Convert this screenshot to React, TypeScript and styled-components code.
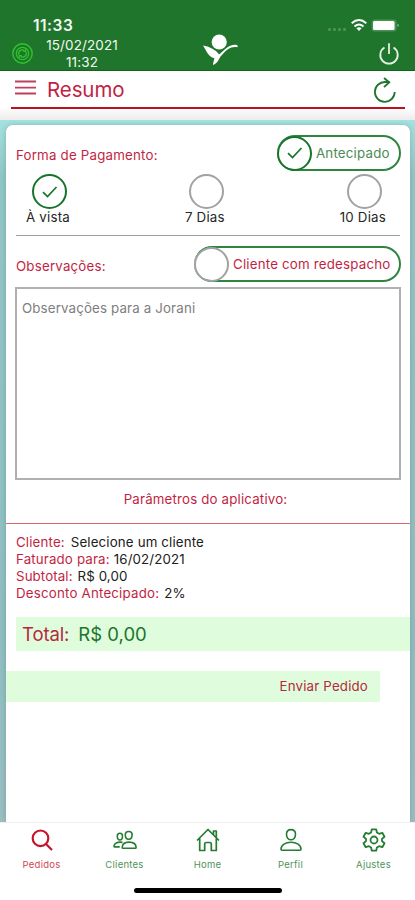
import React from 'react';
import styled, { createGlobalStyle } from 'styled-components';

const GREEN = '#20752c';
const RED = '#c31f43';
const MINT = '#dffddd';

const GlobalStyle = createGlobalStyle`
  * { box-sizing: border-box; }
  body { margin: 0; font-family: Inter, "Liberation Sans", sans-serif; background: #fff; }
  button { border: 0; padding: 0; background: none; font: inherit; display: block; }
  svg { display: block; flex: none; }
`;

const Screen = styled.div`
  width: 415px;
  height: 900px;
  display: flex;
  flex-direction: column;
  overflow: hidden;
`;

const Header = styled.header`
  height: 71px;
  background: ${GREEN};
  color: #f2faf2;
  display: flex;
  flex-direction: column;
  border-bottom: 1px solid #126218;
`;

const StatusBar = styled.div`
  height: 37px;
  padding: 16px 14px 0 33px;
  display: flex;
  justify-content: space-between;
`;

const Clock = styled.span`
  font-size: 15.5px;
  line-height: 20px;
  font-weight: 600;
  letter-spacing: 0.5px;
`;

const HeaderRow = styled.div`
  flex: 1;
  padding: 0 14px 0 11px;
  display: grid;
  grid-template-columns: 23px 96px 1fr 22px;
`;

const SyncSlot = styled.div`
  padding-top: 6px;
`;

const SyncTime = styled.div`
  padding-top: 1px;
  font-size: 13.5px;
  line-height: 17px;
  text-align: center;
  white-space: nowrap;
  letter-spacing: 0.1px;
`;

const LogoSlot = styled.div`
  padding: 0 0 0 72px;
  margin-top: -2px;
`;

const PowerSlot = styled.button`
  color: #e4f1e4;
  display: flex;
  align-items: flex-start;
  padding-top: 6px;
  margin-left: -1px;
`;

const TitleBar = styled.div`
  height: 49px;
  padding: 0 10px 0 11px;
  background: linear-gradient(#fff 36px, #ececec 49px);
`;

const TitleRow = styled.div`
  height: 38px;
  border-bottom: 2px solid #bd1120;
  display: flex;
  padding: 0 8px 0 4px;
`;

const MenuButton = styled.button`
  width: 32px;
  height: 23px;
  padding-top: 9px;
`;

const Title = styled.h1`
  flex: 1;
  margin: 0;
  font-size: 20.5px;
  line-height: 37px;
  font-weight: 400;
  color: ${RED};
  letter-spacing: -0.1px;
`;

const RefreshButton = styled.button`
  height: 36px;
  display: flex;
  align-items: flex-start;
  padding-top: 5px;
`;

const Backdrop = styled.main`
  flex: 1;
  padding: 5px 5px 0 6px;
  background: linear-gradient(#a5e2e0 0, #91c6c7 55px, #8fbec1 520px, #9abec2 702px);
  display: flex;
`;

const Card = styled.section`
  flex: 1;
  background: #fff;
  border-radius: 7px 7px 0 0;
  box-shadow: 0 0 5px rgba(40, 80, 85, 0.25);
  display: flex;
  flex-direction: column;
`;

const FieldHead = styled.div`
  display: flex;
  justify-content: space-between;
  padding: 10px 9px 0 10px;
`;

const Label = styled.span`
  color: ${RED};
  font-size: 13.3px;
  line-height: 16px;
  padding-top: 12px;
  letter-spacing: 0.2px;
`;

const Pill = styled.button<{ $width: number; $color: string }>`
  display: flex;
  align-items: center;
  gap: 4px;
  width: ${p => p.$width}px;
  height: 36px;
  border: 2px solid #2f8440;
  border-left: 0;
  border-radius: 18px;
  color: ${p => p.$color};
  font-size: 13.3px;
  letter-spacing: 0.2px;
  white-space: nowrap;
`;

const Ring = styled.span<{ $on?: boolean }>`
  width: 35px;
  height: 35px;
  flex: none;
  border: 2px solid ${p => (p.$on ? '#17752a' : '#a2a2a2')};
  border-radius: 50%;
  display: flex;
  align-items: center;
  justify-content: center;
`;

const Terms = styled.div`
  margin: 3px 10px 0;
  height: 62px;
  border-bottom: 1px solid #a0a0a0;
  display: flex;
  justify-content: space-between;
  padding: 0 14px 0 10px;
`;

const Term = styled.button`
  display: flex;
  flex-direction: column;
  align-items: center;
  align-self: flex-start;
  font-size: 13.3px;
  line-height: 16px;
  letter-spacing: 0.2px;
  color: #262626;
  white-space: nowrap;

  ${Ring} { margin-left: 4px; }
`;

const Notes = styled.textarea`
  display: block;
  margin: 5px 9px 0 9px;
  height: 193px;
  padding: 11px 5px;
  border: 2px solid #b0b0b0;
  border-radius: 0;
  resize: none;
  font: 13.3px/16px Inter, "Liberation Sans", sans-serif;
  letter-spacing: 0.15px;
  outline: 0;

  &::placeholder { color: #7e7e7e; opacity: 1; }
`;

const Params = styled.div`
  height: 44px;
  padding: 11px 5px 0 0;
  text-align: center;
  font-size: 13.3px;
  line-height: 16px;
  letter-spacing: 0.17px;
  color: ${RED};
  border-bottom: 1px solid #db6670;
`;

const Summary = styled.dl`
  margin: 10px 0 0 10px;
`;

const SummaryLine = styled.div<{ $ls: number; $gap: number }>`
  display: flex;
  gap: ${p => p.$gap}px;
  font-size: 13.3px;
  line-height: 17.1px;
  letter-spacing: ${p => p.$ls}px;

  dt { color: ${RED}; }
  dd { margin: 0; color: #202020; }
`;

const Total = styled.div`
  margin: 15px 0 0 10px;
  height: 34px;
  padding-left: 6px;
  background: ${MINT};
  display: flex;
  gap: 9px;
  font-size: 18.5px;
  line-height: 34px;
  color: ${GREEN};

  strong { font-weight: 400; color: #b6283d; letter-spacing: -0.1px; }
`;

const Submit = styled.button`
  margin-top: 20px;
  width: 374px;
  height: 31px;
  padding-right: 12px;
  background: ${MINT};
  color: #b6283d;
  font-size: 13.3px;
  line-height: 31px;
  letter-spacing: 0.17px;
  text-align: right;
`;

const TabBar = styled.nav`
  height: 78px;
  background: #fff;
  border-top: 1px solid #eee;
  display: flex;
  flex-direction: column;
  align-items: center;
`;

const Tabs = styled.div`
  width: 415px;
  height: 64px;
  display: grid;
  grid-template-columns: repeat(5, 83px);
`;

const Tab = styled.button<{ $active?: boolean }>`
  display: flex;
  flex-direction: column;
  align-items: center;
  padding-top: 4px;
  color: ${p => (p.$active ? '#c5152c' : '#267c32')};
  font-size: 9.5px;
  line-height: 12px;
  letter-spacing: 0.25px;
  gap: 6px;
`;

const TabLabel = styled.span`
  opacity: 0.82;
`;

const HomeIndicator = styled.div`
  width: 148px;
  height: 5px;
  margin-top: 1px;
  border-radius: 3px;
  background: #000;
`;

const Check = () => (
  <svg width="18" height="14" viewBox="0 0 18 14" fill="none" stroke="#17752a" strokeWidth="1.7">
    <path d="M2 7.2 6.5 11.5 15.5 2" />
  </svg>
);

const StatusIcons = () => (
  <svg width="74" height="18" viewBox="0 0 74 18" fill="#fff">
    <g fill="#4b9155">
      <rect x="1" y="12" width="3" height="3" rx="1" />
      <rect x="6" y="12" width="3" height="3" rx="1" />
      <rect x="11" y="12" width="3" height="3" rx="1" />
      <rect x="16" y="12" width="3" height="3" rx="1" />
    </g>
    <g fill="none" stroke="#fff" strokeWidth="2">
      <path d="M24.7 7.2Q32 .8 39.3 7.2" />
      <path d="M27.5 10.4Q32 6.5 36.5 10.4" />
    </g>
    <path d="M29.4 12.2Q32 10.2 34.6 12.2L32 15Z" />
    <rect x="44.5" y="3.5" width="25" height="12" rx="3" fill="#4b9155" />
    <rect x="46" y="5" width="21.5" height="9" rx="1.5" />
    <path d="M70.5 7.5q3 1.800 0 3.600z" fill="#8aba90" />
  </svg>
);

const SyncIcon = () => (
  <svg width="23" height="23" viewBox="0 0 23 23" fill="none" stroke="#2fc52d">
    <circle cx="11.5" cy="11.5" r="9.7" strokeWidth="1.4" />
    <circle cx="11.5" cy="11.5" r="6.2" strokeWidth="1.3" />
    <path d="M8 12.800a3.500 3.500 0 0 1 5.500-4M15 10.200a3.500 3.500 0 0 1-5.500 4" strokeWidth="1.300" />
    <path d="M12.200 9.400h2.600V7M10.800 13.600H8.200V16" strokeWidth="1.100" />
  </svg>
);

const Logo = () => (
  <svg width="37" height="33" viewBox="0 0 37 33" fill="#fff">
    <circle cx="17.2" cy="8" r="7.6" />
    <path d="M1 11.5C7 12.3 13.500 15.500 17.200 20.500 22 16.500 28 9.200 35.300 11.200L35.800 13.200C28 11.500 23 17.300 18.500 22.500 16.500 25.500 16 29 11 31 11 29.200 12 26.500 12.300 24.300 6.500 22.500 5 18 1 11.500Z" />
  </svg>
);

const PowerIcon = () => (
  <svg width="22" height="24" viewBox="0 0 22 24" fill="none" stroke="currentColor" strokeWidth="1.8">
    <path d="M6.500 5.500a8.700 8.700 0 1 0 9 0M11 1.300v10.700" />
  </svg>
);

const MenuIcon = () => (
  <svg width="21" height="15" viewBox="0 0 21 15" stroke="#c23f5c" strokeWidth="1.8">
    <path d="M0 1.500h21M0 7.700h21M0 13.500h21" />
  </svg>
);

const RefreshIcon = () => (
  <svg width="24" height="28" viewBox="0 0 24 28" fill="none" stroke={GREEN} strokeWidth="1.8">
    <path d="M21.700 16A9.900 9.900 0 1 1 12 6h4.300" />
    <path d="M11 2 16.300 6.200 11 11.200" />
  </svg>
);

const SearchIcon = () => (
  <svg width="26" height="26" viewBox="0 0 26 26" fill="none" stroke="currentColor" strokeWidth="2.2">
    <circle cx="11.5" cy="11.300" r="7.800" />
    <path d="m17 17 6 6" />
  </svg>
);

const PeopleIcon = () => (
  <svg width="26" height="26" viewBox="0 0 26 26" fill="none" stroke="currentColor" strokeWidth="1.6" strokeLinejoin="round">
    <path d="M13.300 7.500c0-2 1.100-3 3.400-3s3.400 1 3.400 3c0 2.700-1.300 4.800-3.400 4.800s-3.400-2.100-3.400-4.800ZM10.200 20.500c.1-3.700 2.700-5.400 6.700-5.400s7.200 1.700 7.200 5.400c0 .5-.3.700-.8.700H11c-.5 0-.8-.2-.8-.7Z" />
    <path d="M10.500 9c0 2.200-.9 4-2.600 4s-2.600-1.800-2.600-4c0-1.700 1-2.700 2.600-2.700s2.600 1 2.600 2.700ZM10.500 15.400c-4.500-.9-8 .5-8.600 3.700 0 .6.300.8.800.8h5" />
  </svg>
);

const HomeIcon = () => (
  <svg width="26" height="26" viewBox="0 0 26 26" fill="none" stroke="currentColor" strokeWidth="1.7" strokeLinejoin="round" strokeLinecap="round">
    <path d="M2.500 13 13 2.500 23.500 13M18.500 8V4h2.800v6.700M4.700 11.500V23.500h5V17q0-1.500 1.500-1.500h3.600q1.500 0 1.500 1.500v6.500h5V11.500" />
  </svg>
);

const PersonIcon = () => (
  <svg width="26" height="26" viewBox="0 0 26 26" fill="none" stroke="currentColor" strokeWidth="1.6">
    <path d="M8.500 7.300c0-3 1.800-4.700 4.500-4.700s4.500 1.700 4.500 4.700-1.800 5.500-4.500 5.500-4.500-2.500-4.500-5.500ZM3 22.200c0-4.300 4.500-6.900 10-6.900s10 2.600 10 6.900c0 .6-.3 1-1 1H4c-.7 0-1-.4-1-1Z" />
  </svg>
);

const GearIcon = () => (
  <svg width="26" height="26" viewBox="0 0 26 26" fill="none" stroke="currentColor" strokeWidth="1.8" strokeLinejoin="round">
    <circle cx="13" cy="13" r="3.5" />
    <path d="M10.800 2.300h4.400l.7 3.200 2.200 1.300 3.200-1 2.200 3.900-2.500 2.200v2.200l2.500 2.200-2.200 3.900-3.200-1-2.200 1.300-.7 3.200h-4.400l-.7-3.200-2.200-1.300-3.200 1-2.200-3.900L5 14.100v-2.200L2.500 9.700l2.200-3.900 3.200 1 2.200-1.300Z" />
  </svg>
);

const summary = [
  { label: 'Cliente:', value: 'Selecione um cliente', ls: 0.15, gap: 6 },
  { label: 'Faturado para:', value: '16/02/2021', ls: 0.15, gap: 4 },
  { label: 'Subtotal:', value: 'R$ 0,00', ls: 0.1, gap: 5 },
  { label: 'Desconto Antecipado:', value: '2%', ls: 0.2, gap: 5 },
];

const tabs = [
  { label: 'Pedidos', Icon: SearchIcon },
  { label: 'Clientes', Icon: PeopleIcon },
  { label: 'Home', Icon: HomeIcon },
  { label: 'Perfil', Icon: PersonIcon },
  { label: 'Ajustes', Icon: GearIcon },
];

export default function App() {
  return (
    <Screen>
      <GlobalStyle />
      <Header>
        <StatusBar>
          <Clock>11:33</Clock>
          <StatusIcons />
        </StatusBar>
        <HeaderRow>
          <SyncSlot><SyncIcon /></SyncSlot>
          <SyncTime>15/02/2021<br />11:32</SyncTime>
          <LogoSlot><Logo /></LogoSlot>
          <PowerSlot aria-label="Sair"><PowerIcon /></PowerSlot>
        </HeaderRow>
      </Header>
      <TitleBar>
        <TitleRow>
          <MenuButton aria-label="Menu"><MenuIcon /></MenuButton>
          <Title>Resumo</Title>
          <RefreshButton aria-label="Atualizar"><RefreshIcon /></RefreshButton>
        </TitleRow>
      </TitleBar>
      <Backdrop>
        <Card>
          <FieldHead>
            <Label>Forma de Pagamento:</Label>
            <Pill $width={124} $color="#4b8b55">
              <Ring $on><Check /></Ring>Antecipado
            </Pill>
          </FieldHead>
          <Terms>
            <Term><Ring $on><Check /></Ring>À vista</Term>
            <Term><Ring />7 Dias</Term>
            <Term><Ring />10 Dias</Term>
          </Terms>
          <FieldHead>
            <Label>Observações:</Label>
            <Pill $width={207} $color={RED}>
              <Ring />Cliente com redespacho
            </Pill>
          </FieldHead>
          <Notes placeholder="Observações para a Jorani" />
          <Params>Parâmetros do aplicativo:</Params>
          <Summary>
            {summary.map(s => (
              <SummaryLine key={s.label} $ls={s.ls} $gap={s.gap}>
                <dt>{s.label}</dt>
                <dd>{s.value}</dd>
              </SummaryLine>
            ))}
          </Summary>
          <Total><strong>Total:</strong>R$ 0,00</Total>
          <Submit>Enviar Pedido</Submit>
        </Card>
      </Backdrop>
      <TabBar>
        <Tabs>
          {tabs.map(({ label, Icon }, i) => (
            <Tab key={label} $active={i === 0}><Icon /><TabLabel>{label}</TabLabel></Tab>
          ))}
        </Tabs>
        <HomeIndicator />
      </TabBar>
    </Screen>
  );
}
